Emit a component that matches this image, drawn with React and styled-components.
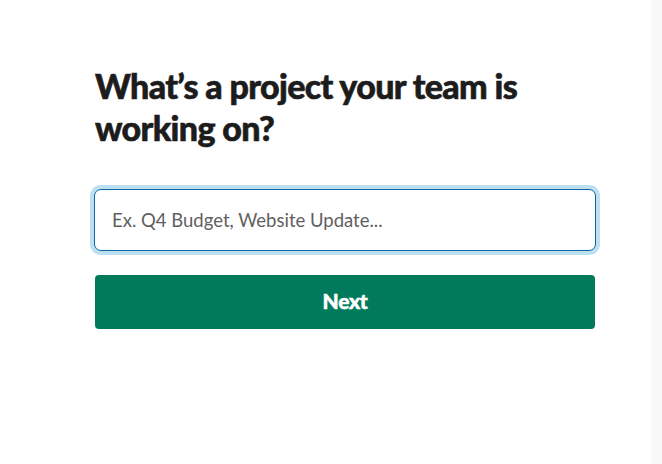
import React from "react";
import styled, { createGlobalStyle } from "styled-components";

const Global = createGlobalStyle`
  html, body { margin: 0; padding: 0; background: #ffffff; }
  body { font-family: Lato, "Noto Sans", sans-serif; -webkit-font-smoothing: antialiased; }
  * { box-sizing: border-box; }
`;

const Page = styled.div`
  display: flex;
  width: 662px;
  height: 464px;
  overflow: hidden;
`;

const Main = styled.main`
  flex: 1;
  background: #ffffff;
  padding: 65px 0 0 95px;
`;

const Gutter = styled.aside`
  width: 11px;
  background: #f8f8f8;
`;

const Form = styled.form`
  width: 500px;
  display: flex;
  flex-direction: column;
`;

const Heading = styled.h1`
  margin: 0 0 40px;
  font-family: Lato, sans-serif;
  font-weight: 900;
  font-size: 34px;
  line-height: 42px;
  letter-spacing: -0.65px;
  color: #1d1c1d;
  -webkit-text-stroke: 0.6px #1d1c1d;
  width: 440px;
`;

const Field = styled.input`
  display: block;
  width: 502px;
  height: 62px;
  margin: 0 0 24px -1px;
  padding: 0 17px;
  border: 1px solid #1264a3;
  border-radius: 7px;
  box-shadow: 0 0 0 4px rgba(29, 155, 209, 0.3);
  font-family: Lato, sans-serif;
  font-size: 18.5px;
  color: #1d1c1d;
  outline: none;
  background: #fff;
  &::placeholder { color: #616061; opacity: 1; }
`;

const Button = styled.button`
  height: 54px;
  width: 500px;
  padding: 0 0 4px;
  border: none;
  border-radius: 4px;
  background: #007a5a;
  color: #ffffff;
  font-family: Lato, sans-serif;
  font-weight: 900;
  font-size: 21px;
  letter-spacing: -0.3px;
  -webkit-text-stroke: 0.5px #ffffff;
  cursor: pointer;
`;

export default function App() {
  return (
    <Page>
      <Global />
      <Main>
        <Form onSubmit={(e) => e.preventDefault()}>
          <Heading>What’s a project your team is working on?</Heading>
          <Field placeholder="Ex. Q4 Budget, Website Update..." />
          <Button type="submit">Next</Button>
        </Form>
      </Main>
      <Gutter />
    </Page>
  );
}
